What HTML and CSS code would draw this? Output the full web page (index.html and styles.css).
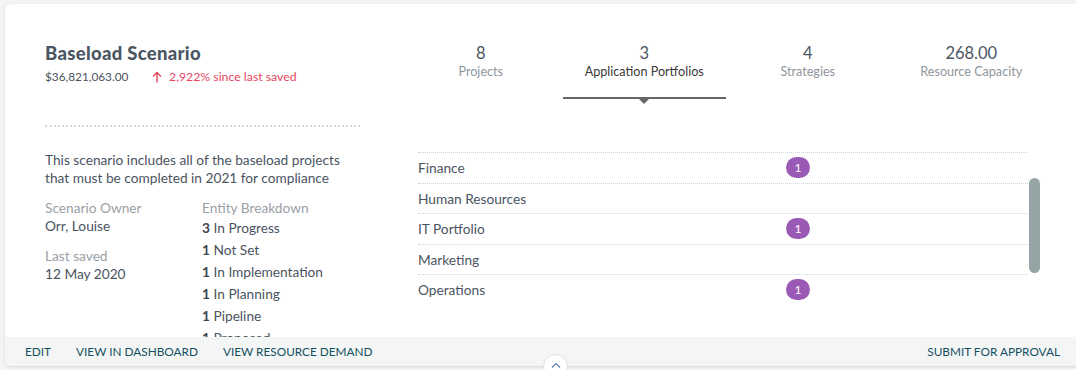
FILE: index.html
```html
<!DOCTYPE html>
<html lang="en">
<head>
  <meta charset="UTF-8" />
  <title>Baseload Scenario</title>
  <link rel="stylesheet" href="styles.css">
</head>
<body>

  <div class="card">
    <div class="card-body">

      <div class="left">
        <div class="summary">
          <div class="title">Baseload Scenario</div>
          <div class="amounts">
            <span class="amount">$36,821,063.00</span>
            <span class="change">
              <svg width="10" height="12" viewBox="0 0 10 12"><path d="M5 11.5V1.5M1 5.5L5 1.5L9 5.5" fill="none" stroke="#e8465e" stroke-width="1.4"/></svg>
              2,922% since last saved
            </span>
          </div>
        </div>

        <p class="desc">This scenario includes all of the baseload projects that must be completed in 2021 for compliance</p>

        <div class="meta">
          <div>
            <div class="field">
              <div class="label">Scenario Owner</div>
              <div class="value">Orr, Louise</div>
            </div>
            <div class="field">
              <div class="label">Last saved</div>
              <div class="value">12 May 2020</div>
            </div>
          </div>
          <div>
            <div class="label">Entity Breakdown</div>
            <ul class="breakdown">
              <li><b>3</b> In Progress</li>
              <li><b>1</b> Not Set</li>
              <li><b>1</b> In Implementation</li>
              <li><b>1</b> In Planning</li>
              <li><b>1</b> Pipeline</li>
              <li><b>1</b> Proposed</li>
            </ul>
          </div>
        </div>
      </div>

      <div class="right">
        <div class="stats">
          <div class="stat">
            <div class="num">8</div>
            <div class="name">Projects</div>
          </div>
          <div class="stat active">
            <div class="num">3</div>
            <div class="name">Application Portfolios</div>
          </div>
          <div class="stat">
            <div class="num">4</div>
            <div class="name">Strategies</div>
          </div>
          <div class="stat">
            <div class="num">268.00</div>
            <div class="name">Resource Capacity</div>
          </div>
        </div>

        <div class="list-wrap">
          <ul class="list">
            <li><span>Finance</span><span class="badge">1</span></li>
            <li><span>Human Resources</span></li>
            <li><span>IT Portfolio</span><span class="badge">1</span></li>
            <li><span>Marketing</span></li>
            <li><span>Operations</span><span class="badge">1</span></li>
          </ul>
          <div class="scrollbar"></div>
        </div>
      </div>

    </div>

    <div class="footer">
      <a>Edit</a>
      <a>View in Dashboard</a>
      <a>View Resource Demand</a>
      <a class="submit">Submit for Approval</a>
      <button class="expand">
        <svg width="10" height="6" viewBox="0 0 10 6"><path d="M1 5.5L5 1.5L9 5.5" fill="none" stroke="#5b7fa6" stroke-width="1.2"/></svg>
      </button>
    </div>
  </div>

</body>
</html>
```

FILE: styles.css
```css
body {
  margin: 0;
  padding: 4px 0 0 5px;
  background: #f3f4f4;
  font-family: Lato, "Open Sans", sans-serif;
  color: #4a5461;
  overflow: hidden;
  height: 370px;
  box-sizing: border-box;
}
.card {
  width: 1085px;
  background: #fff;
  border-radius: 6px;
  box-shadow: 0 1px 3px rgba(0,0,0,0.12);
}
.card-body {
  height: 333px;
  overflow: hidden;
  display: flex;
  gap: 39px;
  padding-left: 40px;
}
.left {
  width: 315px;
  padding-top: 38px;
}
.title {
  font-size: 18.5px;
  font-weight: 900;
  letter-spacing: 0.3px;
  line-height: 22px;
  color: #4b5663;
}
.amounts {
  margin-top: 5px;
  font-size: 11.8px;
  line-height: 16px;
  display: flex;
  align-items: center;
}
.amount {
  width: 107px;
}
.change {
  color: #e8465e;
  display: flex;
  align-items: center;
  gap: 7px;
  font-size: 12.3px;
}
.summary {
  padding-bottom: 40px;
  border-bottom: 2px dotted #d6d9dc;
}
.desc {
  margin: 24px 0 12px;
  font-size: 13.7px;
  line-height: 18px;
}
.meta {
  display: grid;
  grid-template-columns: 157px 1fr;
  font-size: 13.7px;
}
.label {
  color: #9aa1a7;
  line-height: 18px;
}
.field .value {
  line-height: 18px;
}
.field {
  margin-bottom: 12px;
}
.breakdown {
  list-style: none;
  margin: 0;
  padding: 0;
}
.breakdown li {
  line-height: 22px;
}
.breakdown b {
  display: inline-block;
  width: 8px;
  color: #3e4650;
}

.right {
  padding-top: 39px;
  width: 655px;
}
.stats {
  display: grid;
  grid-template-columns: repeat(4, 163.5px);
  text-align: center;
}
.stat {
  position: relative;
  padding-bottom: 16px;
  border-bottom: 2px solid transparent;
}
.stat .num {
  font-size: 16.5px;
  line-height: 20px;
  color: #4b5663;
}
.stat .name {
  font-size: 12.6px;
  line-height: 18px;
  color: #8f969c;
}
.stat.active {
  border-bottom-color: #666;
}
.stat.active .name {
  color: #3a3a3a;
}
.stat.active::after {
  content: "";
  position: absolute;
  left: 50%;
  bottom: -7px;
  margin-left: -5px;
  border: 5px solid transparent;
  border-top-color: #666;
  border-bottom: 0;
}
.list-wrap {
  margin: 53px 0 0 19px;
  display: flex;
  align-items: flex-start;
}
.list {
  list-style: none;
  margin: 0;
  padding: 0;
  width: 610px;
  font-size: 13.7px;
}
.list li {
  height: 30.5px;
  box-sizing: border-box;
  border-top: 1px dotted #d0d3d6;
  display: grid;
  grid-template-columns: 368px auto;
  align-items: center;
  justify-items: start;
}
.badge {
  min-width: 24px;
  height: 21px;
  border-radius: 11px;
  background: #9b59b6;
  color: #fff;
  font-size: 12px;
  line-height: 21px;
  text-align: center;
}
.scrollbar {
  margin: 26px 0 0 1px;
  width: 11px;
  height: 95px;
  border-radius: 6px;
  background: #95a5a6;
}

.footer {
  position: relative;
  height: 29px;
  background: #f4f6f6;
  border-radius: 0 0 6px 6px;
  display: flex;
  align-items: center;
  gap: 25px;
  padding: 0 30px 0 20px;
  font-size: 11.8px;
  text-transform: uppercase;
  color: #14505f;
}
.footer .submit {
  margin-left: auto;
}
.expand {
  position: absolute;
  left: 538px;
  top: 17px;
  width: 25px;
  height: 25px;
  border-radius: 50%;
  border: 1px solid #dde0e2;
  background: #fff;
  padding: 0;
  display: flex;
  justify-content: center;
  padding-top: 7px;
  box-sizing: border-box;
}
```
